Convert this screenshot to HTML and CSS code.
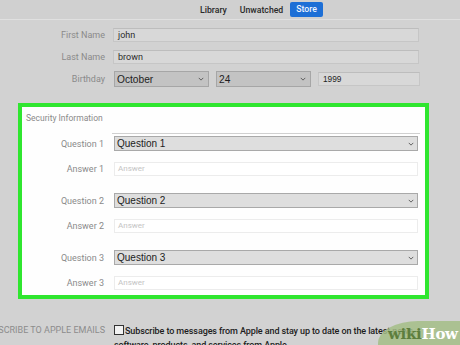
FILE: index.html
```html
<!DOCTYPE html>
<html>
<head>
<meta charset="utf-8">
<link rel="stylesheet" href="styles.css">
</head>
<body>
<div class="topbar">
  <div class="tabs">
    <span class="tab">Library</span>
    <span class="tab">Unwatched</span>
    <span class="tab active">Store</span>
  </div>
</div>

<div class="form">
  <div class="row r1">
    <div class="label">First Name</div>
    <div class="input">john</div>
  </div>
  <div class="row r2">
    <div class="label">Last Name</div>
    <div class="input">brown</div>
  </div>
  <div class="row r3">
    <div class="label">Birthday</div>
    <div class="bday">
      <div class="dsel month"><span>October</span><svg class="chev" viewBox="0 0 8 5"><path d="M1 1l3 3 3-3" /></svg></div>
      <div class="dsel day"><span>24</span><svg class="chev" viewBox="0 0 8 5"><path d="M1 1l3 3 3-3" /></svg></div>
      <div class="input year">1999</div>
    </div>
  </div>
</div>

<div class="security">
  <div class="sec-title">Security Information</div>
  <div class="rule"></div>
  <div class="srow q first">
    <div class="slabel">Question 1</div>
    <div class="qsel"><span>Question 1</span><svg class="chev" viewBox="0 0 8 5"><path d="M1 1l3 3 3-3" /></svg></div>
  </div>
  <div class="srow a">
    <div class="slabel">Answer 1</div>
    <div class="answer">Answer</div>
  </div>
  <div class="srow q">
    <div class="slabel">Question 2</div>
    <div class="qsel"><span>Question 2</span><svg class="chev" viewBox="0 0 8 5"><path d="M1 1l3 3 3-3" /></svg></div>
  </div>
  <div class="srow a">
    <div class="slabel">Answer 2</div>
    <div class="answer">Answer</div>
  </div>
  <div class="srow q">
    <div class="slabel">Question 3</div>
    <div class="qsel"><span>Question 3</span><svg class="chev" viewBox="0 0 8 5"><path d="M1 1l3 3 3-3" /></svg></div>
  </div>
  <div class="srow a">
    <div class="slabel">Answer 3</div>
    <div class="answer">Answer</div>
  </div>
</div>

<div class="subscribe">
  <div class="sublabel">SUBSCRIBE TO APPLE EMAILS</div>
  <div class="subtext"><span class="check"></span>Subscribe to messages from Apple and stay up to date on the latest news,<br>software, products, and services from Apple.</div>
</div>

<div class="wikihow"><span class="wiki">wiki</span><span class="how">How</span></div>
</body>
</html>
```

FILE: styles.css
```css
html, body {
  margin: 0;
  padding: 0;
  width: 460px;
  height: 345px;
  overflow: hidden;
  background: #d2d2d2;
  font-family: Roboto, "Liberation Sans", sans-serif;
  position: relative;
}

.topbar {
  height: 20px;
  border-bottom: 1px solid #e0e0e0;
  background: #d0d0d0;
  box-sizing: border-box;
}

.tabs {
  display: flex;
  align-items: center;
  padding-left: 200px;
  height: 19px;
}

.tab {
  font-size: 8.7px;
  font-weight: 500;
  color: #2a2a2a;
  margin-right: 13px;
  line-height: 12px;
}

.tab.active {
  background: #1d6fd6;
  color: #eef4ff;
  padding: 1px 6px 2px;
  border-radius: 2px;
  margin-right: 0;
  margin-left: -6px;
  line-height: 12px;
}

.form {
  padding-top: 8px;
}

.row {
  display: flex;
  align-items: center;
}

.r2 { margin-top: 8px; }
.r3 { margin-top: 7px; }

.label {
  width: 105px;
  text-align: right;
  font-size: 9px;
  color: #8a8a8a;
  flex-shrink: 0;
}

.input {
  margin-left: 8px;
  width: 306px;
  height: 14px;
  box-sizing: border-box;
  background: #d8d8d8;
  border: 1px solid #c6c6c6;
  border-top-color: #bdbdbd;
  font-size: 9px;
  color: #2b2b2b;
  padding-left: 4px;
  line-height: 12px;
}

.bday {
  display: flex;
  align-items: center;
  margin-left: 9px;
}

.dsel {
  height: 16px;
  box-sizing: border-box;
  background: #c3c3c3;
  border: 1px solid #a6a6a6;
  display: flex;
  align-items: center;
  justify-content: space-between;
  padding: 0 4px 0 2px;
  font-family: "Liberation Sans", Arial, sans-serif;
  font-size: 10.2px;
  color: #1e1e1e;
}

.month { width: 95px; }
.day { width: 95px; margin-left: 7px; }

.year {
  margin-left: 7px;
  width: 102px;
  height: 14px;
  font-family: "Liberation Sans", Arial, sans-serif;
  font-size: 8.3px;
  color: #1e1e1e;
  padding-left: 4px;
}

.chev {
  width: 6px;
  height: 4px;
  fill: none;
  stroke: #555;
  stroke-width: 1.2;
}

.security {
  margin: 16px 0 0 18px;
  width: 411px;
  height: 196px;
  box-sizing: border-box;
  border: 4px solid #2fe62f;
  background: #fefefe;
  padding-top: 5px;
}

.sec-title {
  padding-left: 4px;
  font-size: 8.5px;
  color: #8a8a8a;
  line-height: 12px;
}

.rule {
  margin: 9px 0 0 90px;
  width: 308px;
  height: 1px;
  background: #d0d0d0;
}

.srow {
  display: flex;
  align-items: center;
}

.srow.q { margin-top: 17px; }
.srow.q.first { margin-top: 2px; }
.srow.a { margin-top: 11px; }

.slabel {
  width: 82px;
  text-align: right;
  font-size: 9px;
  color: #8a8a8a;
  flex-shrink: 0;
}

.qsel {
  margin-left: 10px;
  width: 304px;
  height: 15px;
  box-sizing: border-box;
  background: #dedede;
  border: 1px solid #a9a9a9;
  display: flex;
  align-items: center;
  justify-content: space-between;
  padding: 0 3px 0 2px;
  font-family: "Liberation Sans", Arial, sans-serif;
  font-size: 10px;
  color: #1c1c1c;
}

.answer {
  margin-left: 10px;
  width: 304px;
  height: 14px;
  box-sizing: border-box;
  background: #ffffff;
  border: 1px solid #ececec;
  font-size: 8px;
  color: #c4c4c4;
  padding-left: 3px;
  line-height: 12px;
}

.subscribe {
  display: flex;
  margin-top: 25px;
}

.sublabel {
  width: 105px;
  flex-shrink: 0;
  display: flex;
  justify-content: flex-end;
  white-space: nowrap;
  font-size: 9px;
  color: #8c8c8c;
  line-height: 13px;
}

.subtext {
  margin-left: 9px;
  font-size: 9px;
  font-weight: 500;
  color: #1c1c1c;
  line-height: 14px;
  white-space: nowrap;
  letter-spacing: -0.1px;
}

.check {
  display: inline-block;
  width: 8px;
  height: 8px;
  border: 1px solid #333;
  background: #f2f2f2;
  vertical-align: -1px;
  margin-right: 1px;
}

.wikihow {
  position: absolute;
  left: 378px;
  top: 321px;
  width: 100px;
  height: 40px;
  background: rgba(165, 190, 135, 0.85);
  border-top-left-radius: 40px 22px;
  padding: 4px 0 0 10px;
  box-sizing: border-box;
  font-family: "DejaVu Serif", "Liberation Serif", serif;
  font-weight: bold;
  font-size: 15px;
  letter-spacing: -0.3px;
}

.wiki { color: #5d7e3e; }
.how { color: #ffffff; }
```
